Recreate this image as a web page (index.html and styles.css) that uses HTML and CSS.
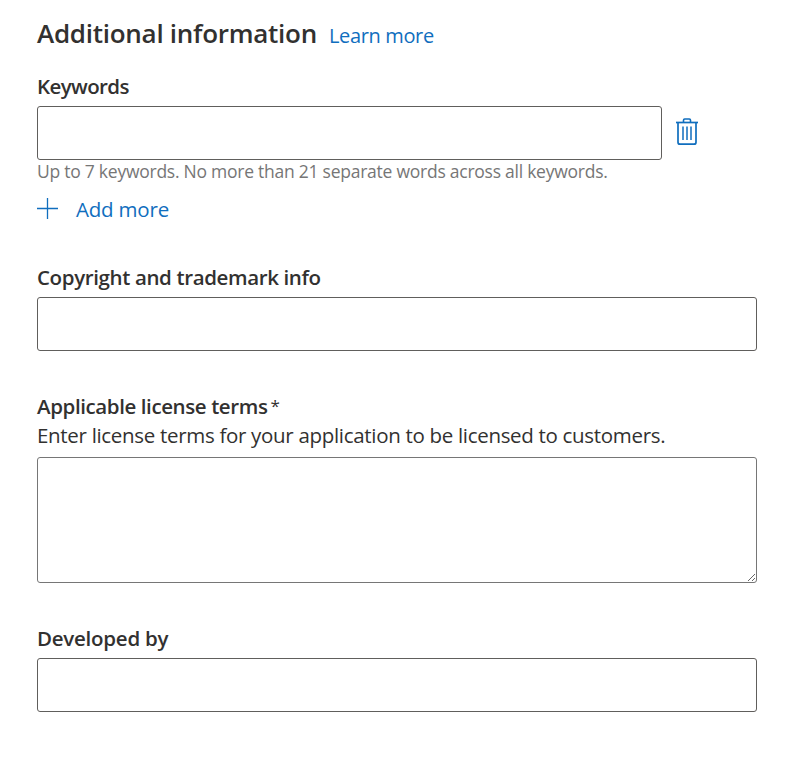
FILE: index.html
```
<!DOCTYPE html>
<html lang="en">
<head>
<meta charset="utf-8">
<title>Additional information</title>
<link rel="stylesheet" href="styles.css">
</head>
<body>
<main class="form">
  <header class="heading">
    <h2 class="title">Additional information</h2>
    <a class="link learn" href="#">Learn more</a>
  </header>

  <section class="field keywords">
    <label class="label label-keywords" for="keywords">Keywords</label>
    <div class="row">
      <input class="input" id="keywords" type="text">
      <button class="delete" type="button" aria-label="Delete">
        <svg width="22" height="28" viewBox="0 0 22 28" fill="none" stroke="currentColor">
          <path d="M0 4.5H22" stroke-width="1.7"/>
          <path d="M7.5 4V2.2Q7.5 1 8.7 1H13.3Q14.5 1 14.5 2.2V4" stroke-width="1.6"/>
          <path d="M2 5V24.2Q2 26.2 4 26.2H18Q20 26.2 20 24.2V5" stroke-width="1.7"/>
          <path d="M7 8.5V22M11 8.5V22M15 8.5V22" stroke-width="1.5"/>
        </svg>
      </button>
    </div>
    <p class="hint">Up to 7 keywords. No more than 21 separate words across all keywords.</p>
    <a class="link add" href="#">
      <svg width="21" height="21" viewBox="0 0 21 21" stroke="currentColor"><path d="M0 10.5H21M10.5 0V21" stroke-width="1.3"/></svg>
      <span class="add-text">Add more</span>
    </a>
  </section>

  <section class="field copyright">
    <label class="label label-copyright" for="copyright">Copyright and trademark info</label>
    <input class="input" id="copyright" type="text">
  </section>

  <section class="field license">
    <label class="label label-license" for="license"><span class="label-text">Applicable license terms</span><span class="required">*</span></label>
    <p class="description">Enter license terms for your application to be licensed to customers.</p>
    <textarea class="input textarea" id="license"></textarea>
  </section>

  <section class="field developer">
    <label class="label label-developer" for="developer">Developed by</label>
    <input class="input" id="developer" type="text">
  </section>
</main>
</body>
</html>
```
FILE: styles.css
```
* { box-sizing: border-box; }

body {
  margin: 0;
  background: #fff;
  color: #323130;
  font-family: "Open Sans", "Noto Sans", sans-serif;
  font-size: 20.5px;
  line-height: 28px;
  white-space: nowrap;
}

.form { width: 757px; padding: 15px 0 0 37px; }

.heading { display: flex; align-items: baseline; gap: 12px; height: 36px; }
.title { margin: 0; font-size: 26px; font-weight: 600; line-height: 36px; letter-spacing: -0.27px; }

.link { color: #106ebe; text-decoration: none; }
.learn { font-size: 20px; letter-spacing: -0.35px; }

.field { display: flex; flex-direction: column; align-items: flex-start; }
.keywords { margin-top: 21px; }
.copyright { margin-top: 40px; }
.license { margin-top: 41px; }
.developer { margin-top: 41px; }

.label { margin-bottom: 6px; font-weight: 600; letter-spacing: -0.37px; }
.label-keywords { letter-spacing: -0.6px; }
.label-developer { letter-spacing: -0.25px; }
.label-license { display: flex; gap: 3px; margin-bottom: 1px; letter-spacing: -0.4px; }
.required { font-size: 17px; font-weight: 400; }

.row { display: flex; align-items: center; gap: 14px; width: 100%; }

.input {
  display: block;
  width: 100%;
  height: 54px;
  margin: 0;
  padding: 0 12px;
  border: 1px solid #605e5c;
  border-radius: 3px;
  background: #fff;
  font: inherit;
  outline: none;
}
.row .input { width: 625px; }
.textarea { height: 126px; border-color: #767676; resize: both; }

.delete { display: flex; margin-bottom: 2px; padding: 0; border: 0; background: none; color: #106ebe; }

.hint { margin: -1px 0 0; color: #767676; font-size: 17.5px; line-height: 24px; letter-spacing: -0.25px; }
.add { display: flex; align-items: center; gap: 18px; margin-top: 12px; letter-spacing: -0.2px; }
.add svg { margin-bottom: 1px; }
.description { margin: 0 0 8px; letter-spacing: -0.31px; }
```
